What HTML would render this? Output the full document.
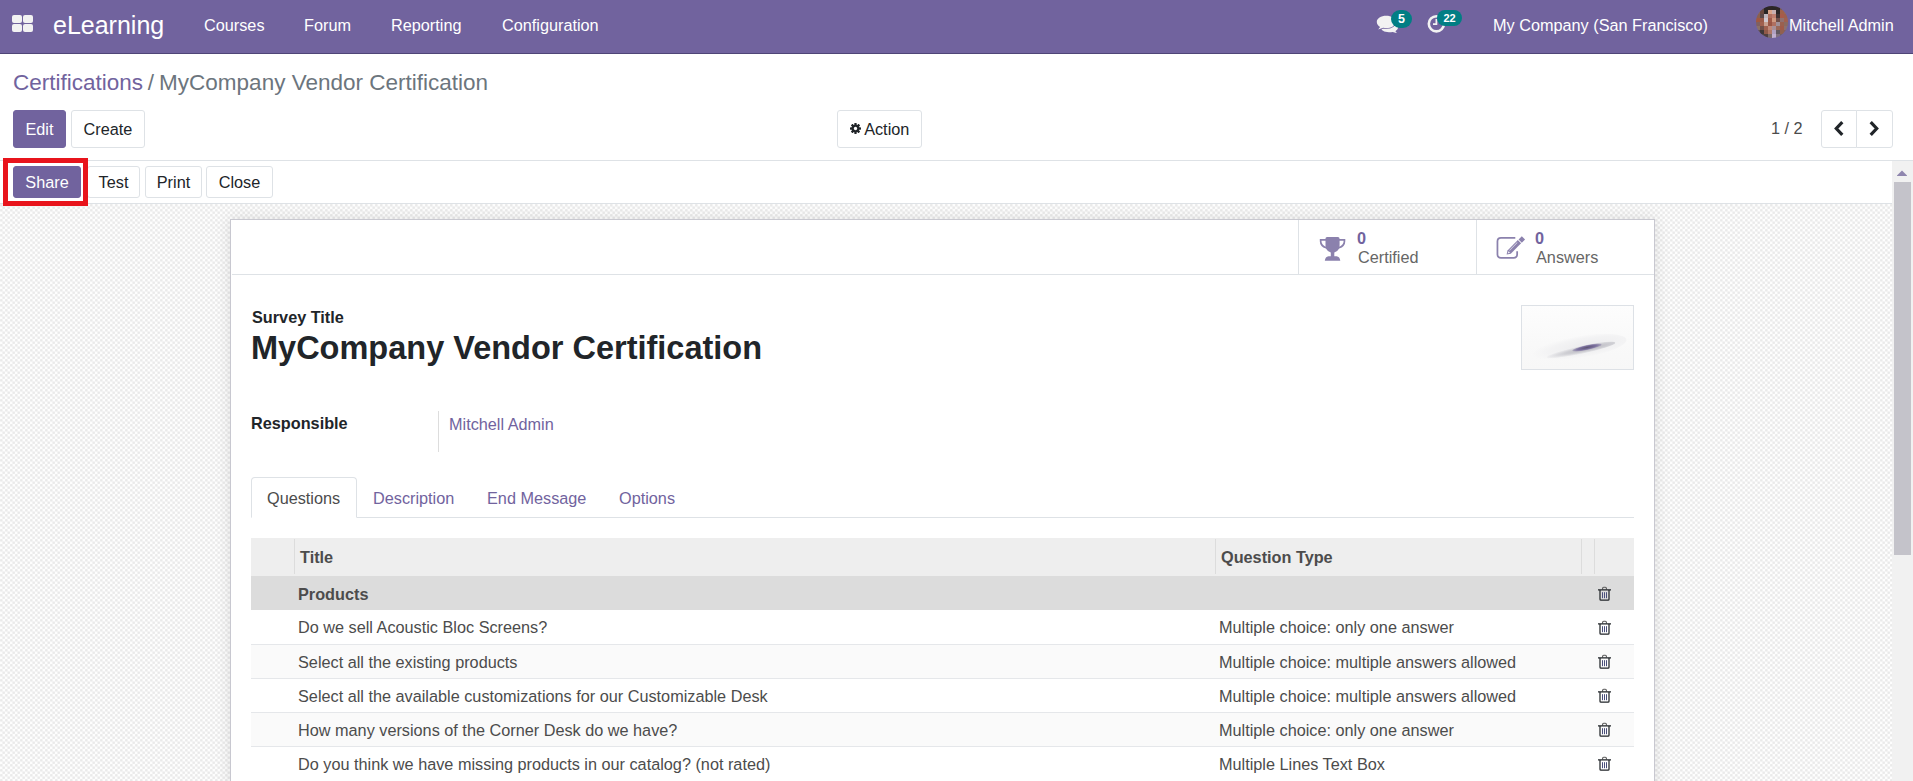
<!DOCTYPE html>
<html><head><meta charset="utf-8">
<style>
*{box-sizing:border-box;margin:0;padding:0}
html,body{width:1913px;height:781px;overflow:hidden;background:#fff;font-family:"Liberation Sans",sans-serif;color:#4c4c4c;font-size:16.25px}
.abs{position:absolute}
#nav{position:absolute;left:0;top:0;width:1913px;height:54px;background:#71639e;border-bottom:1px solid #4f4577;color:#fff}
#nav .t{position:absolute;white-space:nowrap;line-height:1}
.btn{position:absolute;border:1px solid #dee2e6;border-radius:3px;background:#fff;color:#212529;font-size:16.25px;line-height:1;white-space:nowrap;display:flex;align-items:center;justify-content:center}
.btn.p{background:#71639e;border-color:#71639e;color:#fff}
#cp{position:absolute;left:0;top:54px;width:1913px;height:107px;background:#fff;border-bottom:1px solid #dee2e6}
#hdr{position:absolute;left:0;top:161px;width:1892px;height:43px;background:#fff;border-bottom:1px solid #dee2e6}
#bg{position:absolute;left:0;top:204px;width:1892px;height:577px;
background-color:#fdfdfd;background-image:radial-gradient(circle at 1.25px 1.25px,#eaeaea 0.7px,rgba(234,234,234,0) 2.1px),radial-gradient(circle at 3.75px 3.75px,#eaeaea 0.7px,rgba(234,234,234,0) 2.1px);background-size:5px 5px}
#sb{position:absolute;left:1892px;top:161px;width:21px;height:620px;background:#f1f1f1}
#sheet{position:absolute;left:230px;top:219px;width:1425px;height:600px;background:#fff;border:1px solid #c8c8d0;box-shadow:0 0 14px rgba(0,0,0,.1)}
.tx{position:absolute;white-space:nowrap;line-height:1}
</style></head><body>
<div id="nav">
  <div class="abs" style="left:12px;top:15px;width:22px;height:18px">
    <div class="abs" style="left:0;top:0;width:10px;height:8px;background:#f2f2f2;border-radius:2px"></div>
    <div class="abs" style="left:11px;top:0;width:10px;height:8px;background:#f2f2f2;border-radius:2px"></div>
    <div class="abs" style="left:0;top:9px;width:10px;height:8px;background:#f2f2f2;border-radius:2px"></div>
    <div class="abs" style="left:11px;top:9px;width:10px;height:8px;background:#f2f2f2;border-radius:2px"></div>
  </div>
  <div class="t" style="left:53px;top:13px;font-size:25px">eLearning</div>
  <div class="t" style="left:204px;top:17px">Courses</div>
  <div class="t" style="left:304px;top:17px">Forum</div>
  <div class="t" style="left:391px;top:17px">Reporting</div>
  <div class="t" style="left:502px;top:17px">Configuration</div>

  <svg class="abs" style="left:1376px;top:14px" width="26" height="19" viewBox="0 0 26 21" preserveAspectRatio="none">
    <path fill="#f2f2f2" d="M13 9.5c5 0 9 2.3 9 5.5c0 1.6-1 3-2.6 4l1.6 2.2l-4.3-1.4c-1.1.3-2.4.4-3.7.4c-5 0-8-2.3-8-5.2s3-5.5 8-5.5z"/>
    <path fill="#71639e" d="M10 2c5.2 0 9.2 2.9 9.2 6.8s-4 6.8-9.2 6.8c-1 0-2-.1-3-.3l-5 1.9l1.9-2.9C1.9 13.1.6 11.1.6 8.8C.6 4.9 4.8 2 10 2z" transform="translate(0.2,0)" stroke="#71639e" stroke-width="1.6"/>
    <path fill="#f2f2f2" d="M10 2c5.2 0 9.2 2.9 9.2 6.8s-4 6.8-9.2 6.8c-1 0-2-.1-3-.3l-5 1.9l1.9-2.9C1.9 13.1.6 11.1.6 8.8C.6 4.9 4.8 2 10 2z" transform="translate(0.2,0)"/>
  </svg>
  <div class="abs" style="left:1391px;top:10px;width:21px;height:18px;border-radius:9px;background:#017e84;color:#fff;font-size:12.5px;font-weight:bold;line-height:18px;text-align:center">5</div>
  <svg class="abs" style="left:1426px;top:13px" width="21" height="21" viewBox="0 0 21 21">
    <circle cx="10.4" cy="10.8" r="7.6" fill="none" stroke="#f2f2f2" stroke-width="2.6"/>
    <path fill="none" stroke="#f2f2f2" stroke-width="1.8" d="M10.4 6v5.2H7"/>
  </svg>
  <div class="abs" style="left:1437px;top:10px;width:25px;height:16px;border-radius:8px;background:#017e84;color:#fff;font-size:11px;font-weight:bold;line-height:16px;text-align:center">22</div>
  <svg class="abs" style="left:1756px;top:6px" width="32" height="32" viewBox="0 0 32 32"><defs><clipPath id="av"><circle cx="16" cy="16" r="16"/></clipPath><filter id="bl" x="-10%" y="-10%" width="120%" height="120%"><feGaussianBlur stdDeviation="0.7"/></filter></defs><g clip-path="url(#av)"><g filter="url(#bl)"><rect x="0" y="0" width="4" height="4" fill="#6a5550"/><rect x="4" y="0" width="4" height="4" fill="#5a4540"/><rect x="8" y="0" width="4" height="4" fill="#2a2526"/><rect x="12" y="0" width="4" height="4" fill="#2d2627"/><rect x="16" y="0" width="4" height="4" fill="#2a2526"/><rect x="20" y="0" width="4" height="4" fill="#2e2828"/><rect x="24" y="0" width="4" height="4" fill="#7a5a50"/><rect x="28" y="0" width="4" height="4" fill="#8a6a60"/><rect x="0" y="4" width="4" height="4" fill="#8a6555"/><rect x="4" y="4" width="4" height="4" fill="#6b4a40"/><rect x="8" y="4" width="4" height="4" fill="#2a2526"/><rect x="12" y="4" width="4" height="4" fill="#d9a58a"/><rect x="16" y="4" width="4" height="4" fill="#c8b0b0"/><rect x="20" y="4" width="4" height="4" fill="#2a2526"/><rect x="24" y="4" width="4" height="4" fill="#a0604a"/><rect x="28" y="4" width="4" height="4" fill="#9a6555"/><rect x="0" y="8" width="4" height="4" fill="#8a6050"/><rect x="4" y="8" width="4" height="4" fill="#5b4a48"/><rect x="8" y="8" width="4" height="4" fill="#c0b8c0"/><rect x="12" y="8" width="4" height="4" fill="#b07060"/><rect x="16" y="8" width="4" height="4" fill="#c08070"/><rect x="20" y="8" width="4" height="4" fill="#403030"/><rect x="24" y="8" width="4" height="4" fill="#a85a48"/><rect x="28" y="8" width="4" height="4" fill="#9a6050"/><rect x="0" y="12" width="4" height="4" fill="#a05840"/><rect x="4" y="12" width="4" height="4" fill="#9a5a48"/><rect x="8" y="12" width="4" height="4" fill="#d0c8d0"/><rect x="12" y="12" width="4" height="4" fill="#a05a48"/><rect x="16" y="12" width="4" height="4" fill="#d09a80"/><rect x="20" y="12" width="4" height="4" fill="#705048"/><rect x="24" y="12" width="4" height="4" fill="#907070"/><rect x="28" y="12" width="4" height="4" fill="#a06050"/><rect x="0" y="16" width="4" height="4" fill="#806060"/><rect x="4" y="16" width="4" height="4" fill="#a06050"/><rect x="8" y="16" width="4" height="4" fill="#c8a090"/><rect x="12" y="16" width="4" height="4" fill="#9a5545"/><rect x="16" y="16" width="4" height="4" fill="#b07060"/><rect x="20" y="16" width="4" height="4" fill="#a09098"/><rect x="24" y="16" width="4" height="4" fill="#9a6050"/><rect x="28" y="16" width="4" height="4" fill="#8a6a60"/><rect x="0" y="20" width="4" height="4" fill="#8a7068"/><rect x="4" y="20" width="4" height="4" fill="#705048"/><rect x="8" y="20" width="4" height="4" fill="#a06050"/><rect x="12" y="20" width="4" height="4" fill="#c08878"/><rect x="16" y="20" width="4" height="4" fill="#a89098"/><rect x="20" y="20" width="4" height="4" fill="#9a6858"/><rect x="24" y="20" width="4" height="4" fill="#a05a48"/><rect x="28" y="20" width="4" height="4" fill="#8a7070"/><rect x="0" y="24" width="4" height="4" fill="#605050"/><rect x="4" y="24" width="4" height="4" fill="#403838"/><rect x="8" y="24" width="4" height="4" fill="#905a48"/><rect x="12" y="24" width="4" height="4" fill="#b07868"/><rect x="16" y="24" width="4" height="4" fill="#b0a0c0"/><rect x="20" y="24" width="4" height="4" fill="#605860"/><rect x="24" y="24" width="4" height="4" fill="#906050"/><rect x="28" y="24" width="4" height="4" fill="#806060"/><rect x="0" y="28" width="4" height="4" fill="#605050"/><rect x="4" y="28" width="4" height="4" fill="#504545"/><rect x="8" y="28" width="4" height="4" fill="#504040"/><rect x="12" y="28" width="4" height="4" fill="#7a6a6a"/><rect x="16" y="28" width="4" height="4" fill="#c0b0d0"/><rect x="20" y="28" width="4" height="4" fill="#807080"/><rect x="24" y="28" width="4" height="4" fill="#706060"/><rect x="28" y="28" width="4" height="4" fill="#706060"/></g></g></svg>
  <div class="t" style="left:1493px;top:17px">My Company (San Francisco)</div>
  <div class="t" style="left:1789px;top:17px">Mitchell Admin</div>
</div>
<div id="cp">
  <div class="tx" style="left:13px;top:18px;font-size:22.5px"><span style="color:#71639e">Certifications</span><span style="color:#6c757d;margin-left:4.8px">/</span><span style="color:#6c757d;margin-left:5px">MyCompany Vendor Certification</span></div>
  <div class="btn p" style="left:13px;top:56px;width:53px;height:38px">Edit</div>
  <div class="btn" style="left:71px;top:56px;width:74px;height:38px">Create</div>
  <div class="btn" style="left:837px;top:56px;width:85px;height:38px"><svg width="11" height="11" viewBox="0 0 12 12" style="margin-right:3.5px;margin-top:-1px"><g fill="#212529"><circle cx="6" cy="6" r="4.2"/><rect x="4.7" y="0" width="2.6" height="12" rx=".5"/><rect x="0" y="4.7" width="12" height="2.6" rx=".5"/><rect x="4.7" y="0" width="2.6" height="12" rx=".5" transform="rotate(45 6 6)"/><rect x="4.7" y="0" width="2.6" height="12" rx=".5" transform="rotate(-45 6 6)"/></g><circle cx="6" cy="6" r="1.8" fill="#fff"/></svg>Action</div>
  <div class="tx" style="left:1771px;top:66px;color:#4c4c4c">1 / 2</div>
  <div class="btn" style="left:1821px;top:56px;width:36px;height:38px;border-radius:3px 0 0 3px"><svg width="10" height="15" viewBox="0 0 10 15" style="margin-left:0px;margin-top:-1px"><path fill="none" stroke="#212529" stroke-width="3.2" d="M8.3 1.2L2.3 7.5l6 6.3"/></svg></div>
  <div class="btn" style="left:1856px;top:56px;width:37px;height:38px;border-radius:0 3px 3px 0"><svg width="10" height="15" viewBox="0 0 10 15" style="margin-left:-1px;margin-top:-1px"><path fill="none" stroke="#212529" stroke-width="3.2" d="M1.7 1.2l6 6.3l-6 6.3"/></svg></div>
</div>
<div id="hdr">
  <div class="btn p" style="left:13px;top:5px;width:68px;height:32px">Share</div>
  <div class="btn" style="left:87px;top:5px;width:53px;height:32px">Test</div>
  <div class="btn" style="left:145px;top:5px;width:57px;height:32px">Print</div>
  <div class="btn" style="left:206px;top:5px;width:67px;height:32px">Close</div>
</div>
<div id="bg"></div>
<div id="sb"><svg class="abs" style="left:5px;top:9px" width="10" height="6" viewBox="0 0 10 6"><path fill="#8f86ae" d="M5 0.5L10.5 6H-0.5z"/></svg><div class="abs" style="left:2px;top:21px;width:17px;height:373px;background:#c4c3ca"></div></div>
<div id="sheet"></div>
<div id="sheetc">
  <!-- button box -->
  <div class="abs" style="left:232px;top:274px;width:1422px;height:1px;background:#dee2e6"></div>
  <div class="abs" style="left:1298px;top:220px;width:1px;height:54px;background:#dee2e6"></div>
  <div class="abs" style="left:1476px;top:220px;width:1px;height:54px;background:#dee2e6"></div>
  <svg class="abs" style="left:1319px;top:236px" width="27" height="26" viewBox="0 0 27 26"><path fill="#8b81ad" fill-rule="evenodd" d="M8 1H19Q20.5 1 20.5 2.5V3H26.3V5.2Q26.3 10.5 20.2 12.6Q18.6 15.6 15.3 16.6V20.3H17.6Q20.8 20.6 21.3 24.8H5.8Q6.3 20.6 9.5 20.3H11.8V16.6Q8.5 15.6 6.9 12.6Q0.8 10.5 0.8 5.2V3H6.5V2.5Q6.5 1 8 1ZM2.5 4.7V5.2Q2.5 8.6 6.6 10.7Q6.5 9.5 6.5 8V4.7ZM24.6 4.7V5.2Q24.6 8.6 20.5 10.7Q20.6 9.5 20.6 8V4.7Z"/></svg>
  <div class="tx" style="left:1357px;top:230px;font-size:16.25px;font-weight:bold;color:#71639e">0</div>
  <div class="tx" style="left:1358px;top:249px;color:#666">Certified</div>
  <svg class="abs" style="left:1490px;top:228px" width="40" height="38" viewBox="0 0 40 38"><path fill="none" stroke="#8b81ad" stroke-width="1.75" d="M25.3 9.85H11Q7.45 9.85 7.45 13.4V26.2Q7.45 29.75 11 29.75H23.6Q27.15 29.75 27.15 26.2V23.2"/><g transform="translate(16.6,26.6) rotate(-45)"><path fill="#8b81ad" d="M0 0L3.6 -2.3H18.2V2.3H3.6Z"/><rect fill="#8b81ad" x="19.2" y="-2.3" width="4.6" height="4.6"/><path fill="#fff" d="M1.6 0L3.8 -1V1Z"/><rect fill="#fff" x="5" y="-1.3" width="11" height=".7" opacity=".7"/></g></svg>
  <div class="tx" style="left:1535px;top:230px;font-size:16.25px;font-weight:bold;color:#71639e">0</div>
  <div class="tx" style="left:1536px;top:249px;color:#666">Answers</div>
  <!-- title -->
  <div class="tx" style="left:252px;top:309px;font-weight:bold;color:#212529">Survey Title</div>
  <div class="tx" style="left:251px;top:332px;font-size:32.5px;font-weight:bold;color:#212529">MyCompany Vendor Certification</div>
  <div class="abs" style="left:1521px;top:305px;width:113px;height:65px;border:1px solid #dde1e6;overflow:hidden;background:linear-gradient(#fdfdfd,#f9f9f9 60%,#f7f7f7)">
    <div class="abs" style="left:10px;top:30px;width:95px;height:22px;border-radius:50%;background:radial-gradient(ellipse at 58% 50%,#ececee 0%,#f3f3f4 50%,rgba(248,248,248,0) 72%);transform:rotate(-9deg)"></div>
    <div class="abs" style="left:24px;top:40px;width:70px;height:8px;border-radius:50%;background:radial-gradient(ellipse at 62% 50%,#b9b8c0 0%,#cfcfd4 40%,rgba(230,230,234,0) 75%);transform:rotate(-12deg)"></div>
    <div class="abs" style="left:50px;top:39px;width:30px;height:5px;border-radius:50%;background:radial-gradient(ellipse at 50% 50%,#5d5473 0%,#7d72a0 45%,rgba(160,150,190,0) 85%);transform:rotate(-12deg)"></div>
  </div>
  <!-- responsible -->
  <div class="tx" style="left:251px;top:415px;font-weight:bold;color:#212529">Responsible</div>
  <div class="abs" style="left:438px;top:411px;width:1px;height:41px;background:#dddddd"></div>
  <div class="tx" style="left:449px;top:416px;color:#71639e">Mitchell Admin</div>
  <!-- tabs -->
  <div class="abs" style="left:251px;top:517px;width:1383px;height:1px;background:#dee2e6"></div>
  <div class="abs" style="left:251px;top:477px;width:106px;height:41px;border:1px solid #dee2e6;border-bottom-color:#fff;border-radius:4px 4px 0 0;background:#fff"></div>
  <div class="tx" style="left:267px;top:490px;color:#4c4c4c">Questions</div>
  <div class="tx" style="left:373px;top:490px;color:#71639e">Description</div>
  <div class="tx" style="left:487px;top:490px;color:#71639e">End Message</div>
  <div class="tx" style="left:619px;top:490px;color:#71639e">Options</div>
  <!-- table -->
  <div class="abs" style="left:251px;top:538px;width:1383px;height:38px;background:#eeeeee"></div>
  <div class="abs" style="left:294px;top:539px;width:1px;height:35px;background:#dcdcdc"></div>
  <div class="abs" style="left:1215px;top:539px;width:1px;height:35px;background:#dcdcdc"></div>
  <div class="abs" style="left:1581px;top:539px;width:1px;height:35px;background:#dcdcdc"></div>
  <div class="abs" style="left:1594px;top:539px;width:1px;height:35px;background:#dcdcdc"></div>
  <div class="tx" style="left:300px;top:548.5px;font-weight:bold;color:#4c4c4c">Title</div>
  <div class="tx" style="left:1221px;top:548.5px;font-weight:bold;color:#4c4c4c">Question Type</div>
  <div class="abs" style="left:251px;top:576px;width:1383px;height:34px;background:#dcdcdc"></div>
  <div class="tx" style="left:298px;top:585.5px;font-weight:bold;color:#4c4c4c">Products</div>
  <svg class="abs" style="left:1597px;top:585.50px" width="15" height="15" viewBox="0 0 15 15"><path fill="none" stroke="#5a5a5a" stroke-width="1.1" d="M5.6 3.6V2.3Q5.6 1.2 6.7 1.2H8.3Q9.4 1.2 9.4 2.3V3.6"/><path fill="none" stroke="#212529" stroke-width="1.25" d="M1 3.9H14M3 3.9V13.3Q3 14.2 3.9 14.2H11.1Q12 14.2 12 13.3V3.9"/><path fill="none" stroke="#4a4f7a" stroke-width="1" d="M5.5 6.2V12.2M7.5 6.2V12.2M9.5 6.2V12.2"/></svg>
  <div class="abs" style="left:251px;top:610px;width:1383px;height:34px;background:#fff;"></div>
  <div class="tx" style="left:298px;top:619.40px">Do we sell Acoustic Bloc Screens?</div>
  <div class="tx" style="left:1219px;top:619.40px">Multiple choice: only one answer</div>
  <svg class="abs" style="left:1597px;top:619.60px" width="15" height="15" viewBox="0 0 15 15"><path fill="none" stroke="#5a5a5a" stroke-width="1.1" d="M5.6 3.6V2.3Q5.6 1.2 6.7 1.2H8.3Q9.4 1.2 9.4 2.3V3.6"/><path fill="none" stroke="#212529" stroke-width="1.25" d="M1 3.9H14M3 3.9V13.3Q3 14.2 3.9 14.2H11.1Q12 14.2 12 13.3V3.9"/><path fill="none" stroke="#4a4f7a" stroke-width="1" d="M5.5 6.2V12.2M7.5 6.2V12.2M9.5 6.2V12.2"/></svg>
  <div class="abs" style="left:251px;top:644px;width:1383px;height:34px;background:#fafafa;border-top:1px solid #e5e7ea;"></div>
  <div class="tx" style="left:298px;top:653.60px">Select all the existing products</div>
  <div class="tx" style="left:1219px;top:653.60px">Multiple choice: multiple answers allowed</div>
  <svg class="abs" style="left:1597px;top:653.60px" width="15" height="15" viewBox="0 0 15 15"><path fill="none" stroke="#5a5a5a" stroke-width="1.1" d="M5.6 3.6V2.3Q5.6 1.2 6.7 1.2H8.3Q9.4 1.2 9.4 2.3V3.6"/><path fill="none" stroke="#212529" stroke-width="1.25" d="M1 3.9H14M3 3.9V13.3Q3 14.2 3.9 14.2H11.1Q12 14.2 12 13.3V3.9"/><path fill="none" stroke="#4a4f7a" stroke-width="1" d="M5.5 6.2V12.2M7.5 6.2V12.2M9.5 6.2V12.2"/></svg>
  <div class="abs" style="left:251px;top:678px;width:1383px;height:34px;background:#fff;border-top:1px solid #e5e7ea;"></div>
  <div class="tx" style="left:298px;top:687.60px">Select all the available customizations for our Customizable Desk</div>
  <div class="tx" style="left:1219px;top:687.60px">Multiple choice: multiple answers allowed</div>
  <svg class="abs" style="left:1597px;top:687.60px" width="15" height="15" viewBox="0 0 15 15"><path fill="none" stroke="#5a5a5a" stroke-width="1.1" d="M5.6 3.6V2.3Q5.6 1.2 6.7 1.2H8.3Q9.4 1.2 9.4 2.3V3.6"/><path fill="none" stroke="#212529" stroke-width="1.25" d="M1 3.9H14M3 3.9V13.3Q3 14.2 3.9 14.2H11.1Q12 14.2 12 13.3V3.9"/><path fill="none" stroke="#4a4f7a" stroke-width="1" d="M5.5 6.2V12.2M7.5 6.2V12.2M9.5 6.2V12.2"/></svg>
  <div class="abs" style="left:251px;top:712px;width:1383px;height:34px;background:#fafafa;border-top:1px solid #e5e7ea;"></div>
  <div class="tx" style="left:298px;top:721.60px">How many versions of the Corner Desk do we have?</div>
  <div class="tx" style="left:1219px;top:721.60px">Multiple choice: only one answer</div>
  <svg class="abs" style="left:1597px;top:721.60px" width="15" height="15" viewBox="0 0 15 15"><path fill="none" stroke="#5a5a5a" stroke-width="1.1" d="M5.6 3.6V2.3Q5.6 1.2 6.7 1.2H8.3Q9.4 1.2 9.4 2.3V3.6"/><path fill="none" stroke="#212529" stroke-width="1.25" d="M1 3.9H14M3 3.9V13.3Q3 14.2 3.9 14.2H11.1Q12 14.2 12 13.3V3.9"/><path fill="none" stroke="#4a4f7a" stroke-width="1" d="M5.5 6.2V12.2M7.5 6.2V12.2M9.5 6.2V12.2"/></svg>
  <div class="abs" style="left:251px;top:746px;width:1383px;height:34px;background:#fff;border-top:1px solid #e5e7ea;"></div>
  <div class="tx" style="left:298px;top:755.60px">Do you think we have missing products in our catalog? (not rated)</div>
  <div class="tx" style="left:1219px;top:755.60px">Multiple Lines Text Box</div>
  <svg class="abs" style="left:1597px;top:755.60px" width="15" height="15" viewBox="0 0 15 15"><path fill="none" stroke="#5a5a5a" stroke-width="1.1" d="M5.6 3.6V2.3Q5.6 1.2 6.7 1.2H8.3Q9.4 1.2 9.4 2.3V3.6"/><path fill="none" stroke="#212529" stroke-width="1.25" d="M1 3.9H14M3 3.9V13.3Q3 14.2 3.9 14.2H11.1Q12 14.2 12 13.3V3.9"/><path fill="none" stroke="#4a4f7a" stroke-width="1" d="M5.5 6.2V12.2M7.5 6.2V12.2M9.5 6.2V12.2"/></svg>
</div>

<div class="abs" style="left:3px;top:158px;width:85px;height:48px;border:5px solid #e8141c"></div>
</body></html>
